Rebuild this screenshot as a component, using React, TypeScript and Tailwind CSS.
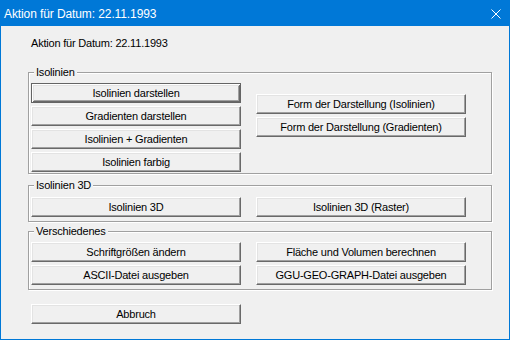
const Btn = ({ label, isDefault = false }: { label: string; isDefault?: boolean }) =>
  isDefault ? (
    <button className="flex h-[20px] w-[210px] items-center justify-center border border-[#646464] bg-[#f0f0f0] p-0 text-[11px] leading-[13px] tracking-[-0.2px] text-black shadow-[inset_1px_1px_0_#ffffff,inset_-1px_-1px_0_#696969,inset_2px_2px_0_#e3e3e3,inset_-2px_-2px_0_#a0a0a0]">
      {label}
    </button>
  ) : (
    <button className="flex h-[20px] w-[210px] items-center justify-center border border-t-white border-l-white border-r-[#696969] border-b-[#696969] bg-[#f0f0f0] p-0 text-[11px] leading-[13px] tracking-[-0.2px] text-black shadow-[inset_-1px_-1px_0_#a0a0a0,inset_1px_1px_0_#e3e3e3]">
      {label}
    </button>
  );

const Legend = ({ text }: { text: string }) => (
  <legend className="ml-[3px] bg-[#f0f0f0] px-[2px] text-[11px] leading-[13px] tracking-[-0.2px] text-black">
    {text}
  </legend>
);

export default function App() {
  return (
    <div className="h-[341px] w-[511px] bg-white font-['Liberation_Sans',Arial,sans-serif]">
      <div className="flex h-[340px] w-[510px] flex-col border border-[#0078d7] bg-[#f0f0f0]">
        {/* title bar */}
        <div className="flex h-[25px] shrink-0 items-center justify-between bg-[#0078d7] pl-[3px] pr-[8px] text-[12px] tracking-[-0.1px] text-white">
          <span>Aktion für Datum: 22.11.1993</span>
          <svg width="10" height="10" viewBox="0 0 10 10" aria-hidden="true">
            <path d="M0.5 0.5L9.5 9.5M9.5 0.5L0.5 9.5" stroke="#ffffff" strokeWidth="1" />
          </svg>
        </div>

        <div className="flex flex-col pl-[27px]">
          <p className="ml-[3px] mt-[11px] text-[11px] leading-[13px] tracking-[-0.2px] text-black">
            Aktion für Datum: 22.11.1993
          </p>

          <fieldset className="m-0 mt-[16px] w-[464px] min-w-0 border border-[#a0a0a0] pb-[1px] pl-[2px] pr-0 pt-[4px] shadow-[inset_1px_1px_0_#ffffff,1px_1px_0_#ffffff]">
            <Legend text="Isolinien" />
            <div className="flex gap-[15px]">
              <div className="flex flex-col gap-[3px]">
                <Btn label="Isolinien darstellen" isDefault />
                <Btn label="Gradienten darstellen" />
                <Btn label="Isolinien + Gradienten" />
                <Btn label="Isolinien farbig" />
              </div>
              <div className="flex flex-col gap-[3px] pt-[11px]">
                <Btn label="Form der Darstellung (Isolinien)" />
                <Btn label="Form der Darstellung (Gradienten)" />
              </div>
            </div>
          </fieldset>

          <fieldset className="m-0 mt-[5px] w-[464px] min-w-0 border border-[#a0a0a0] pb-[4px] pl-[2px] pr-0 pt-[5px] shadow-[inset_1px_1px_0_#ffffff,1px_1px_0_#ffffff]">
            <Legend text="Isolinien 3D" />
            <div className="flex gap-[15px]">
              <Btn label="Isolinien 3D" />
              <Btn label="Isolinien 3D (Raster)" />
            </div>
          </fieldset>

          <fieldset className="m-0 mt-[3px] w-[464px] min-w-0 border border-[#a0a0a0] pb-[4px] pl-[2px] pr-0 pt-[4px] shadow-[inset_1px_1px_0_#ffffff,1px_1px_0_#ffffff]">
            <Legend text="Verschiedenes" />
            <div className="grid grid-cols-[210px_210px] gap-x-[15px] gap-y-[3px]">
              <Btn label="Schriftgrößen ändern" />
              <Btn label="Fläche und Volumen berechnen" />
              <Btn label="ASCII-Datei ausgeben" />
              <Btn label="GGU-GEO-GRAPH-Datei ausgeben" />
            </div>
          </fieldset>

          <div className="ml-[3px] mt-[14px]">
            <Btn label="Abbruch" />
          </div>
        </div>
      </div>
    </div>
  );
}
